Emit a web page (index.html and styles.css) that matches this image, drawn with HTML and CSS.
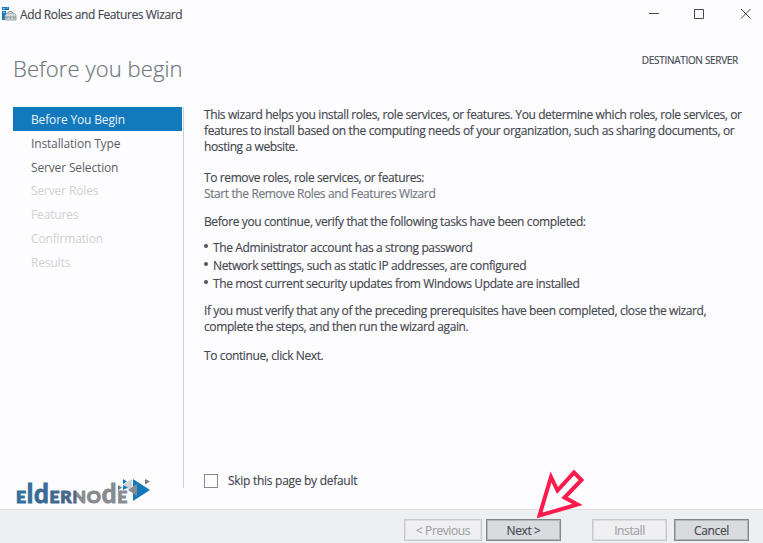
FILE: index.html
```html
<!DOCTYPE html>
<html lang="en">
<head>
<meta charset="utf-8">
<title>Add Roles and Features Wizard</title>
<link rel="stylesheet" href="styles.css">
</head>
<body>
<div class="window">
  <header class="titlebar">
    <svg class="app-icon" width="15" height="15" viewBox="0 0 15 15">
      <path d="M0 1h7v3H0zM0 5h4v9H0z" fill="#1379bd"/>
      <path d="M1 2.500h2M5 2h1M1 6.500h2" stroke="#9fd0ee"/>
      <path d="M3 9l2-2h7l2 2v5H3z" fill="#d5d8da" stroke="#8b9297" stroke-width=".8"/>
      <path d="M6 7l1-1.500h3L11 7M3 11h11M5 11v2M8.500 11v2M12 11v2" fill="none" stroke="#7b858d" stroke-width=".8"/>
    </svg>
    <span class="title">Add Roles and Features Wizard</span>
    <svg class="controls" width="104" height="12" viewBox="0 0 104 12" fill="none" stroke="#454951">
      <path d="M0 5.500h10"/>
      <path d="M45.500 1.500h9v9h-9z"/>
      <path d="M92 1l9.500 9.500M101.500 1L92 10.500"/>
    </svg>
  </header>
  <div class="heading">
    <h1>Before you begin</h1>
    <span class="destination">DESTINATION SERVER</span>
  </div>
  <div class="body">
    <nav class="steps">
      <span class="step active">Before You Begin</span>
      <span class="step">Installation Type</span>
      <span class="step">Server Selection</span>
      <span class="step disabled">Server Roles</span>
      <span class="step disabled">Features</span>
      <span class="step disabled">Confirmation</span>
      <span class="step disabled">Results</span>
    </nav>
    <main class="content">
      <p>This wizard helps you install roles, role services, or features. You determine which roles, role services, or<br><span class="wide">features to install based on the computing needs of your organization, such as sharing documents, or</span><br>hosting a website.</p>
      <p class="remove">To remove roles, role services, or features:<br><a>Start the Remove Roles and Features Wizard</a></p>
      <p class="verify">Before you continue, verify that the following tasks have been completed:</p>
      <ul>
        <li>The Administrator account has a strong password</li>
        <li>Network settings, such as static IP addresses, are configured</li>
        <li>The most current security updates from Windows Update are installed</li>
      </ul>
      <p class="must">If you must verify that any of the preceding prerequisites have been completed, close the wizard,<br>complete the steps, and then run the wizard again.</p>
      <p class="continue">To continue, click Next.</p>
      <label class="skip"><span class="box"></span><span>Skip this page by default</span></label>
    </main>
  </div>
  <footer class="footer">
    <span class="btn disabled prev">&lt; Previous</span>
    <span class="btn next">Next &gt;</span>
    <span class="btn disabled install">Install</span>
    <span class="btn cancel">Cancel</span>
  </footer>
  <svg class="brand" width="140" height="32" viewBox="0 0 140 32">
    <defs><linearGradient id="ink" x1="0" y1="0" x2="1" y2="0"><stop offset="0" stop-color="#2f6f9f"/><stop offset=".54" stop-color="#4c6585"/><stop offset=".54" stop-color="#858b8e"/><stop offset="1" stop-color="#858b8e"/></linearGradient></defs>
    <text class="brand-text" fill="url(#ink)" stroke="url(#ink)" y="25.300" x="0" textLength="112" lengthAdjust="spacingAndGlyphs"><tspan>E</tspan><tspan class="tall">ld</tspan><tspan>ERNO</tspan><tspan class="tall">d</tspan><tspan>E</tspan></text>
    <path d="M117 1l17 11-17 11z" fill="#1379bd"/>
    <path d="M108 6l8-5v11l-7-2z" fill="#d0d2d5"/>
    <path d="M112 12l9-6v12z" fill="#858b8e"/>
    <path d="M107 1l4 2.500-4 2.500zM107 7l5 2.500-5 2.500z" fill="#1379bd"/>
    <path d="M102 7l4 2.500-4 3zM129 1l5 2.500-5 3z" fill="#747b81"/>
  </svg>
  <svg class="pointer" width="48" height="52" viewBox="0 0 48 52">
    <path d="M2.500 47.500L14 9 20.500 22.500 37 4.500 44.500 12 27.500 29.500 40.500 36.500z" fill="#fdfcff" stroke="#fb1b4d" stroke-width="4"/>
  </svg>
</div>
</body>
</html>
```

FILE: styles.css
```css
* { box-sizing: border-box; }
body { margin: 0; font-family: "Open Sans", "Noto Sans", sans-serif; font-size: 12px; letter-spacing: -0.39px; line-height: 16px; color: #44484f; -webkit-text-stroke: 0.15px; }
.window { position: relative; width: 763px; height: 543px; overflow: hidden; background: #fdfcff; display: flex; flex-direction: column; white-space: nowrap; }
.titlebar { height: 30px; display: flex; align-items: flex-start; padding: 5px 10px 0 2px; }
.app-icon { display: block; margin-top: 1px; }
.title { margin-left: 3px; line-height: 19px; }
.controls { margin: 3px 0 0 auto; }
.heading { height: 77px; display: flex; justify-content: space-between; padding: 20px 25px 0 13px; }
h1 { margin: 0; font-size: 22px; letter-spacing: 0.1px; line-height: 36px; font-weight: 300; color: #72787c; -webkit-text-stroke: 0.2px; }
.destination { font-size: 10px; letter-spacing: -0.3px; line-height: 20px; }
.body { height: 402px; display: flex; padding-left: 13px; }
.steps { flex: none; width: 171px; height: 381px; border-right: 1px solid #ced0d4; display: flex; flex-direction: column; padding-right: 1px; letter-spacing: -0.15px; -webkit-text-stroke: 0; }
.step { height: 23.75px; line-height: 26px; padding-left: 18px; color: #5c6066; }
.step.active { background: #1379bd; color: #e8f3fb; }
.step.disabled { color: #d0d1d4; }
.content { padding-left: 20px; display: flex; flex-direction: column; align-items: flex-start; }
p { margin: 0; }
a { color: #73797f; }
.wide { letter-spacing: -0.36px; }
.remove { margin-top: 15px; }
.verify { margin-top: 12px; }
ul { list-style: none; margin: 9px 0 0; padding: 0; }
li { height: 18px; line-height: 18px; display: flex; align-items: center; }
li::before { content: ""; width: 4px; height: 4px; border-radius: 2px; background: #50545c; margin: -4px 5px 0 0; }
.must { margin-top: 10px; }
.continue { margin-top: 13px; }
.skip { margin-top: 109px; display: flex; align-items: center; letter-spacing: -0.28px; }
.box { width: 14px; height: 14px; border: 1px solid #858991; margin-right: 10px; }
.footer { height: 34px; background: #eeeff1; border-top: 1px solid #dcdde0; display: flex; padding: 9px 14px 0 404px; }
.btn { height: 22px; width: 75px; border: 1px solid #83868c; outline: 1px solid #b3b5b9; outline-offset: -2px; background: #dadbde; display: flex; justify-content: center; line-height: 22px; }
.btn.disabled { background: #f0f0f2; border-color: #c6c8cb; outline-color: #dcdee0; color: #a0a3a8; }
.prev { width: 78px; }
.next { margin-left: 4px; box-shadow: 0 2px 0 #eeeff1, 0 3px 0 #414d68; }
.install { margin-left: 31px; }
.cancel { margin-left: 7px; }
.brand { position: absolute; left: 16px; top: 478px; letter-spacing: 0.8px; -webkit-text-stroke: 0; }
.brand-text { font-family: Lato, sans-serif; font-weight: 900; font-size: 17.5px; -webkit-text-stroke: 0.6px; }
.tall { font-size: 26px; font-weight: 700; }
.pointer { position: absolute; left: 537px; top: 468px; }
```
